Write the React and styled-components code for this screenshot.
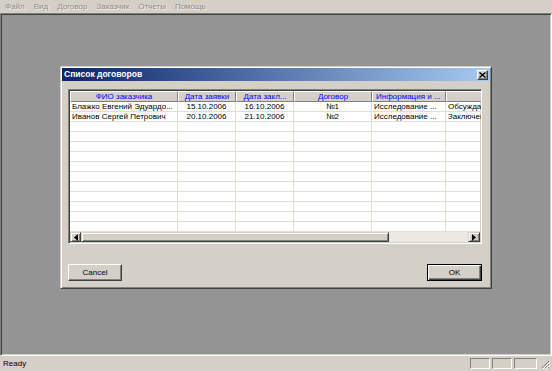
import styled, { createGlobalStyle } from "styled-components";

const GlobalStyle = createGlobalStyle`
  html, body {
    margin: 0;
    padding: 0;
  }
  body {
    font-family: "Liberation Sans", Arial, sans-serif;
    font-size: 8px;
  }
`;

const Frame = styled.div`
  display: flex;
  flex-direction: column;
  width: 552px;
  height: 371px;
  background: #d4d0c8;
  overflow: hidden;
`;

const MenuBar = styled.div`
  display: flex;
  align-items: center;
  gap: 9px;
  height: 13px;
  padding-left: 5px;
  flex-shrink: 0;
`;
const MenuItem = styled.span`
  color: #8c8a86;
  text-shadow: 1px 1px 0 #f4f2ee;
  font-size: 8px;
  line-height: 13px;
`;

const Workspace = styled.div`
  flex: 1;
  background: #949494;
  border-style: solid;
  border-width: 1px;
  border-color: #808080 #ffffff #ffffff #808080;
  box-shadow: inset 1px 1px 0 #404040, inset -1px -1px 0 #d4d0c8;
  padding: 52px 0 0 59px;
`;

const Dialog = styled.div`
  display: flex;
  flex-direction: column;
  width: 432px;
  height: 223px;
  box-sizing: border-box;
  background: #d4d0c8;
  border-style: solid;
  border-width: 1px;
  border-color: #d4d0c8 #404040 #404040 #d4d0c8;
  box-shadow: inset 1px 1px 0 #ffffff, inset -1px -1px 0 #808080;
  padding: 1px;
`;

const TitleBar = styled.div`
  display: flex;
  align-items: center;
  justify-content: space-between;
  height: 13px;
  padding: 0 2px 0 2px;
  background: linear-gradient(to right, #0a246a, #a6caf0);
`;
const Title = styled.span`
  color: #ffffff;
  font-weight: bold;
  font-size: 8.5px;
  line-height: 13px;
`;
const CloseButton = styled.div`
  display: flex;
  align-items: center;
  justify-content: center;
  width: 11px;
  height: 10px;
  box-sizing: border-box;
  background: #d4d0c8;
  border-style: solid;
  border-width: 1px;
  border-color: #ffffff #404040 #404040 #ffffff;
  box-shadow: inset -1px -1px 0 #808080;
`;

const Body = styled.div`
  display: flex;
  flex-direction: column;
  flex: 1;
  padding: 8px 7px 0 6px;
`;

const Grid = styled.div`
  display: flex;
  flex-direction: column;
  width: 414px;
  height: 155px;
  box-sizing: border-box;
  border-style: solid;
  border-width: 1px;
  border-color: #808080 #ffffff #ffffff #808080;
  box-shadow: inset 1px 1px 0 #404040, inset -1px -1px 0 #d4d0c8;
  padding: 1px;
  background: #ffffff;
  overflow: hidden;
`;

const HeaderRow = styled.div`
  display: flex;
  height: 11px;
  flex-shrink: 0;
`;
const HeaderCell = styled.div`
  width: ${(p) => p.$w}px;
  flex-shrink: 0;
  box-sizing: border-box;
  background: #d4d0c8;
  border-style: solid;
  border-width: 1px;
  border-color: #ffffff #808080 #808080 #ffffff;
  color: #0000ff;
  font-size: 8px;
  line-height: 9px;
  text-align: ${(p) => p.$align};
  padding: 0 3px;
  white-space: nowrap;
  overflow: hidden;
`;

const Row = styled.div`
  display: flex;
  height: 10px;
  flex-shrink: 0;
`;
const Cell = styled.div`
  width: ${(p) => p.$w}px;
  flex-shrink: 0;
  box-sizing: border-box;
  border-right: 1px solid #e2ded6;
  border-bottom: 1px solid #e2ded6;
  color: #000000;
  font-size: 8px;
  line-height: 9px;
  text-align: ${(p) => p.$align};
  padding: 0 2px;
  white-space: nowrap;
  overflow: hidden;
`;

const ScrollBar = styled.div`
  display: flex;
  height: 10px;
  flex-shrink: 0;
  margin-top: auto;
  background: #ece9e3;
`;
const ScrollButton = styled.div`
  display: flex;
  align-items: center;
  justify-content: center;
  width: ${(p) => p.$w}px;
  flex-shrink: 0;
  box-sizing: border-box;
  background: #d4d0c8;
  border-style: solid;
  border-width: 1px;
  border-color: #d4d0c8 #404040 #404040 #d4d0c8;
  box-shadow: inset 1px 1px 0 #ffffff, inset -1px -1px 0 #808080;
`;
const Track = styled.div`
  flex: 1;
`;

const ButtonRow = styled.div`
  display: flex;
  justify-content: space-between;
  margin-top: 20px;
  width: 414px;
`;
const PushButton = styled.button`
  width: ${(p) => p.$w}px;
  height: 17px;
  box-sizing: border-box;
  padding: 0;
  font-family: "Liberation Sans", Arial, sans-serif;
  font-size: 8px;
  color: #000000;
  background: #d4d0c8;
  border-style: solid;
  border-width: 1px;
  border-color: ${(p) => (p.$default ? "#000000" : "#ffffff #404040 #404040 #ffffff")};
  box-shadow: ${(p) =>
    p.$default
      ? "inset 1px 1px 0 #ffffff, inset -1px -1px 0 #404040, inset -2px -2px 0 #808080"
      : "inset -1px -1px 0 #808080"};
`;

const StatusBar = styled.div`
  display: flex;
  align-items: center;
  height: 15px;
  flex-shrink: 0;
  padding: 0 2px 0 3px;
`;
const StatusText = styled.span`
  flex: 1;
  font-size: 8px;
  color: #000000;
`;
const StatusPanel = styled.div`
  width: ${(p) => p.$w}px;
  height: 11px;
  box-sizing: border-box;
  margin-left: 2px;
  border-style: solid;
  border-width: 1px;
  border-color: #808080 #ffffff #ffffff #808080;
`;
const Gripper = styled.div`
  display: flex;
  align-items: flex-end;
  margin-left: 4px;
  width: 9px;
  height: 11px;
`;

const columns = [
  { title: "ФИО заказчика", w: 108, align: "center", cell: "left" },
  { title: "Дата заявки", w: 58, align: "center", cell: "center" },
  { title: "Дата закл...", w: 58, align: "center", cell: "center" },
  { title: "Договор", w: 78, align: "center", cell: "center" },
  { title: "Информация и ...", w: 74, align: "left", cell: "left" },
  { title: "", w: 40, align: "left", cell: "left" },
];

const data = [
  ["Блажко Евгений Эдуардо...", "15.10.2006", "16.10.2006", "№1", "Исследование ...", "Обсуждается"],
  ["Иванов Сергей Петрович", "20.10.2006", "21.10.2006", "№2", "Исследование ...", "Заключен"],
];

const rows = [...data, ...Array.from({ length: 11 }, () => ["", "", "", "", "", ""])];

const menu = ["Файл", "Вид", "Договор", "Заказчик", "Отчеты", "Помощь"];

const Arrow = ({ dir }) => (
  <svg width="4" height="7" viewBox="0 0 4 7">
    {dir === "left" ? <path d="M4 0 L0 3.5 L4 7 Z" fill="#000" /> : <path d="M0 0 L4 3.5 L0 7 Z" fill="#000" />}
  </svg>
);

export default function App() {
  return (
    <Frame>
      <GlobalStyle />
      <MenuBar>
        {menu.map((m) => (
          <MenuItem key={m}>{m}</MenuItem>
        ))}
      </MenuBar>
      <Workspace>
        <Dialog>
          <TitleBar>
            <Title>Список договоров</Title>
            <CloseButton>
              <svg width="7" height="6" viewBox="0 0 7 6">
                <path d="M0.5 0.5 L6.5 5.5 M6.5 0.5 L0.5 5.5" stroke="#000" strokeWidth="1.4" />
              </svg>
            </CloseButton>
          </TitleBar>
          <Body>
            <Grid>
              <HeaderRow>
                {columns.map((c, i) => (
                  <HeaderCell key={i} $w={c.w} $align={c.align}>
                    {c.title}
                  </HeaderCell>
                ))}
              </HeaderRow>
              {rows.map((r, ri) => (
                <Row key={ri}>
                  {r.map((v, ci) => (
                    <Cell key={ci} $w={columns[ci].w} $align={columns[ci].cell}>
                      {v}
                    </Cell>
                  ))}
                </Row>
              ))}
              <ScrollBar>
                <ScrollButton $w={11}>
                  <Arrow dir="left" />
                </ScrollButton>
                <ScrollButton $w={308} />
                <Track />
                <ScrollButton $w={12}>
                  <Arrow dir="right" />
                </ScrollButton>
              </ScrollBar>
            </Grid>
            <ButtonRow>
              <PushButton $w={54}>Cancel</PushButton>
              <PushButton $w={55} $default>
                OK
              </PushButton>
            </ButtonRow>
          </Body>
        </Dialog>
      </Workspace>
      <StatusBar>
        <StatusText>Ready</StatusText>
        <StatusPanel $w={20} />
        <StatusPanel $w={20} />
        <StatusPanel $w={23} />
        <Gripper>
          <svg width="9" height="9" viewBox="0 0 9 9">
            <path d="M8 1 L1 8 M8 4 L4 8 M8 7 L7 8" stroke="#808080" strokeWidth="1" />
            <path d="M9 2 L2 9 M9 5 L5 9" stroke="#ffffff" strokeWidth="1" />
          </svg>
        </Gripper>
      </StatusBar>
    </Frame>
  );
}
